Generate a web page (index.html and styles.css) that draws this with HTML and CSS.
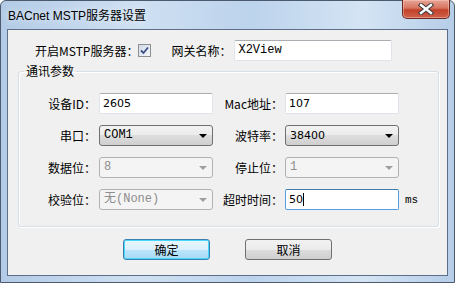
FILE: index.html
```html
<!DOCTYPE html>
<html>
<head>
<title>BACnet MSTP服务器设置</title>
<link rel="stylesheet" href="styles.css">
</head>
<body>

<!-- dialog window, win7 style frame -->
<div class="window">
  <div class="titlebar">
    <span class="title">BACnet MSTP服务器设置</span>
    <span class="close-btn">
      <svg width="16" height="12" viewBox="0 0 16 12">
        <path d="M3 2 L13 10 M13 2 L3 10" stroke="#3a3a3a" stroke-width="4.4" stroke-linecap="square"/>
        <path d="M3 2 L13 10 M13 2 L3 10" stroke="#ffffff" stroke-width="2.4" stroke-linecap="square"/>
      </svg>
    </span>
  </div>

  <div class="client">
    <!-- first line: enable + gateway name -->
    <div class="top-row">
      <span class="lbl">开启MSTP服务器：</span>
      <span class="checkbox">
        <svg width="9" height="9" viewBox="0 0 9 9">
          <path d="M1 4.5 L3.5 7 L8 1.5" stroke="#3d4f86" stroke-width="1.8" fill="none"/>
        </svg>
      </span>
      <span class="lbl gw-label">网关名称：</span>
      <div class="edit gw-edit mono">X2View</div>
    </div>

    <!-- comm params group -->
    <fieldset class="group">
      <legend>通讯参数</legend>
      <div class="param-grid">
        <span class="lbl l1">设备ID：</span>
        <div class="edit">2605</div>
        <span class="lbl l2">Mac地址：</span>
        <div class="edit">107</div>
        <span></span>

        <span class="lbl l1">串口：</span>
        <div class="combo simsun">COM1<span class="arrow"></span></div>
        <span class="lbl l2">波特率：</span>
        <div class="combo">38400<span class="arrow"></span></div>
        <span></span>

        <span class="lbl l1">数据位：</span>
        <div class="combo disabled simsun">8<span class="arrow"></span></div>
        <span class="lbl l2">停止位：</span>
        <div class="combo disabled simsun">1<span class="arrow"></span></div>
        <span></span>

        <span class="lbl l1">校验位：</span>
        <div class="combo disabled simsun">无(None)<span class="arrow"></span></div>
        <span class="lbl l2">超时时间：</span>
        <div class="edit focus">50<span class="caret"></span></div>
        <span class="unit mono">ms</span>
      </div>
    </fieldset>

    <div class="buttons">
      <div class="btn default">确定</div>
      <div class="btn">取消</div>
    </div>
  </div>
</div>

</body>
</html>
```

FILE: styles.css
```css
body {
  margin: 0;
  background: #ffffff;
  font-family: "Noto Sans CJK SC", sans-serif;
  font-size: 12px;
  color: #000;
}

/* outer frame */
.window {
  box-sizing: border-box;
  width: 455px;
  height: 283px;
  border: 1px solid #4b5a6c;
  border-radius: 6px 6px 0 0;
  background: linear-gradient(to right, #b3cbe6 0%, #cfe0f2 30%, #bcd3ec 55%, #d4e4f4 80%, #b6cde8 100%);
}

.titlebar {
  display: flex;
  justify-content: space-between;
  align-items: flex-start;
  height: 28px;
}

.title {
  padding: 7px 0 0 7px;
  font-family: "Liberation Sans", "Noto Sans CJK SC", sans-serif;
  font-size: 12px;
  line-height: 16px;
  color: #000;
  text-shadow: 0 0 6px #eef4fb;
}

.close-btn {
  display: flex;
  align-items: center;
  justify-content: center;
  box-sizing: border-box;
  width: 48px;
  height: 19px;
  margin: -1px 4px 0 0;
  border: 1px solid #6b2a20;
  border-top: none;
  border-radius: 0 0 5px 5px;
  background: linear-gradient(#e9a597 0%, #d7735f 45%, #c2412a 55%, #d0624a 100%);
  box-shadow: inset 0 0 0 1px rgba(255, 210, 200, 0.45);
}

/* client area */
.client {
  box-sizing: border-box;
  width: 441px;
  height: 247px;
  margin-left: 6px;
  border: 1px solid #5d6f86;
  background: #f0f0f0;
}

.lbl {
  white-space: nowrap;
  line-height: 21px;
}

.top-row {
  display: flex;
  align-items: center;
  height: 21px;
  margin-top: 10px;
  padding-left: 27px;
}

.checkbox {
  display: flex;
  align-items: center;
  justify-content: center;
  box-sizing: border-box;
  width: 13px;
  height: 13px;
  border: 1px solid #8e8f8f;
  background: linear-gradient(135deg, #cfd9e6, #f6f8fb);
}

.gw-label {
  margin-left: 20px;
}

.edit {
  box-sizing: border-box;
  height: 21px;
  padding: 0 3px;
  border: 1px solid #e2e3ea;
  border-top-color: #abadb3;
  border-radius: 2px;
  background: #fff;
  font-family: "DejaVu Sans", sans-serif;
  font-size: 11px;
  line-height: 19px;
  display: flex;
  align-items: center;
}

.gw-edit {
  width: 158px;
  margin-left: 3px;
}

.mono {
  font-family: "Liberation Mono", monospace;
  font-size: 12px;
}

.simsun {
  font-family: "Liberation Mono", "Noto Sans CJK SC", monospace;
  font-size: 12px;
}

.edit.focus {
  border-color: #569de5;
  border-top-color: #3d7bad;
}

.caret {
  display: inline-block;
  width: 1px;
  height: 13px;
  background: #000;
}

/* group box */
.group {
  box-sizing: border-box;
  width: 421px;
  margin: 3px 0 0 10px;
  padding: 15px 0 16px 0;
  border: 1px solid #d5dfe5;
  border-radius: 3px;
  box-shadow: inset 1px 1px 0 #fff, 1px 1px 0 #fff;
}

.group legend {
  margin-left: 5px;
  padding: 0 2px;
  line-height: 14px;
}

.param-grid {
  display: grid;
  grid-template-columns: 80px 114px 72px 114px auto;
  grid-template-rows: 21px 21px 21px 21px;
  row-gap: 11px;
  align-items: center;
}

.l1 {
  text-align: right;
  padding-right: 3px;
}

.l2 {
  text-align: right;
  padding-right: 2px;
}

.unit {
  padding-left: 6px;
  font-size: 11px;
}

/* drop down lists */
.combo {
  position: relative;
  box-sizing: border-box;
  height: 21px;
  padding: 0 4px;
  border: 1px solid #707070;
  border-radius: 3px;
  background: linear-gradient(#f2f2f2 0%, #ebebeb 50%, #dddddd 50%, #cfcfcf 100%);
  font-family: "DejaVu Sans", sans-serif;
  font-size: 11px;
  line-height: 19px;
}

.combo.simsun {
  font-family: "Liberation Mono", "Noto Sans CJK SC", monospace;
  font-size: 12px;
}

.combo .arrow {
  position: absolute;
  right: 5px;
  top: 8px;
  border-left: 4px solid transparent;
  border-right: 4px solid transparent;
  border-top: 4px solid #000;
}

.combo.disabled {
  border-color: #adb2b5;
  background: #f4f4f4;
  color: #8d8d8d;
}

.combo.disabled .arrow {
  border-top-color: #a0a0a0;
}

/* buttons */
.buttons {
  display: flex;
  justify-content: center;
  gap: 35px;
  margin-top: 12px;
}

.btn {
  box-sizing: border-box;
  width: 87px;
  height: 21px;
  border: 1px solid #707070;
  border-radius: 3px;
  background: linear-gradient(#f2f2f2 0%, #ebebeb 50%, #dddddd 50%, #cfcfcf 100%);
  text-align: center;
  line-height: 19px;
}

.btn.default {
  border-color: #3c7fb1;
  background: linear-gradient(#eaf6fd 0%, #d9f0fc 50%, #bee6fd 50%, #a7d9f5 100%);
  box-shadow: inset 0 0 0 1px #48d7fc;
}
```
